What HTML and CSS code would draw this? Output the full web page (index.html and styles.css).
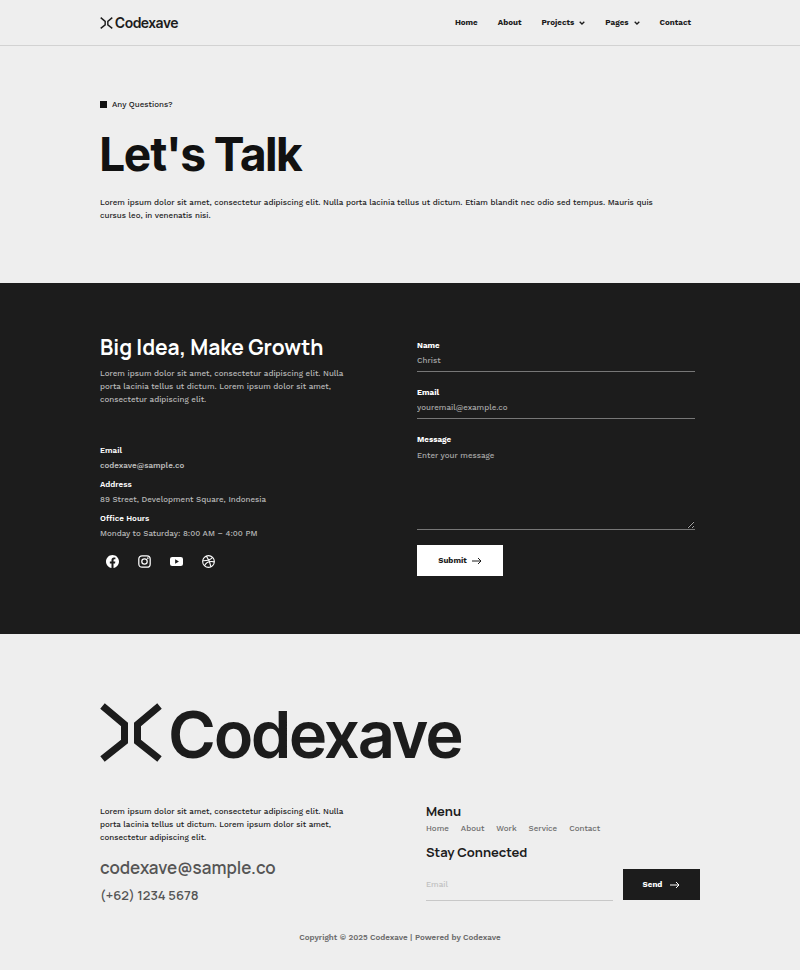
FILE: index.html
```html
<!DOCTYPE html>
<html lang="en">
<head>
<meta charset="utf-8">
<meta name="viewport" content="width=device-width, initial-scale=1">
<title>Codexave – Contact</title>
<link rel="stylesheet" href="styles.css">
</head>
<body>
<svg class="sprite" aria-hidden="true">
  <symbol id="mark" viewBox="0 0 62 59">
    <path d="M2.500 3 24.500 21.500V38.500L2.500 56M59.500 3 37.500 21.500V38.500L59.500 56" fill="none" stroke="currentColor" stroke-width="7"/>
  </symbol>
  <symbol id="arrow" viewBox="0 0 10 8">
    <path d="M0 4H9M6 1 9 4 6 7" fill="none" stroke="currentColor" stroke-width="1"/>
  </symbol>
  <symbol id="chevron" viewBox="0 0 6 4">
    <path d="M.7.700 3 3 5.300.700" fill="none" stroke="currentColor" stroke-width="1.300"/>
  </symbol>
</svg>

<header class="site-header">
  <div class="container header-row">
    <a class="brand" href="#"><svg class="brand-mark"><use href="#mark"/></svg>Codexave</a>
    <nav class="main-nav" aria-label="Main">
      <a href="#">Home</a>
      <a href="#">About</a>
      <a href="#">Projects<svg class="chevron"><use href="#chevron"/></svg></a>
      <a href="#">Pages<svg class="chevron"><use href="#chevron"/></svg></a>
      <a href="#">Contact</a>
    </nav>
  </div>
</header>

<main>
  <section class="hero">
    <div class="container">
      <p class="eyebrow">Any Questions?</p>
      <h1>Let's Talk</h1>
      <p class="lead">Lorem ipsum dolor sit amet, consectetur adipiscing elit. Nulla porta lacinia tellus ut dictum. Etiam blandit nec odio sed tempus. Mauris quis cursus leo, in venenatis nisi.</p>
    </div>
  </section>

  <section class="contact">
    <div class="container contact-grid">
      <div class="details">
        <h2>Big Idea, Make Growth</h2>
        <p class="intro">Lorem ipsum dolor sit amet, consectetur adipiscing elit. Nulla porta lacinia tellus ut dictum. Lorem ipsum dolor sit amet, consectetur adipiscing elit.</p>
        <dl>
          <dt>Email</dt>
          <dd><a class="mail" href="mailto:codexave@sample.co">codexave@sample.co</a></dd>
          <dt>Address</dt>
          <dd>89 Street, Development Square, Indonesia</dd>
          <dt>Office Hours</dt>
          <dd>Monday to Saturday: 8:00 AM – 4:00 PM</dd>
        </dl>
        <div class="social">
          <a href="#" aria-label="Facebook"><svg viewBox="0 0 24 24"><path fill="currentColor" d="M24 12.070C24 5.400 18.630 0 12 0S0 5.400 0 12.070c0 6.030 4.390 11.020 10.130 11.930v-8.440H7.080v-3.490h3.050V9.410c0-3.030 1.790-4.700 4.530-4.700 1.310 0 2.680.24 2.680.24v2.970h-1.510c-1.490 0-1.960.93-1.960 1.890v2.260h3.330l-.53 3.490h-2.800V24C19.610 23.090 24 18.100 24 12.070"/></svg></a>
          <a href="#" aria-label="Instagram"><svg viewBox="0 0 24 24"><g fill="none" stroke="currentColor" stroke-width="2.300"><rect x="1.500" y="1.500" width="21" height="21" rx="6"/><circle cx="12" cy="12" r="5"/></g><circle cx="18.200" cy="5.800" r="1.500" fill="currentColor"/></svg></a>
          <a href="#" aria-label="YouTube"><svg viewBox="0 0 24 24"><path fill="currentColor" fill-rule="evenodd" d="M4 3.500h16a4 4 0 0 1 4 4v9a4 4 0 0 1-4 4H4a4 4 0 0 1-4-4v-9a4 4 0 0 1 4-4zM9.500 8v8l7-4z"/></svg></a>
          <a href="#" aria-label="Dribbble"><svg viewBox="0 0 24 24"><g fill="none" stroke="currentColor" stroke-width="2"><circle cx="12" cy="12" r="10.800"/><path d="M8 2c4 5 7 11 8.500 20M1.300 10.500C9 10.700 15.500 9 19.500 4.300M4.500 19.700c3.500-6.500 10-9 18.200-7"/></g></svg></a>
        </div>
      </div>

      <form class="contact-form">
        <label for="name">Name</label>
        <input id="name" type="text" placeholder="Christ">
        <label for="email">Email</label>
        <input id="email" type="email" placeholder="youremail@example.co">
        <label for="message">Message</label>
        <textarea id="message" placeholder="Enter your message"></textarea>
        <button class="button light" type="button">Submit<svg class="arrow"><use href="#arrow"/></svg></button>
      </form>
    </div>
  </section>
</main>

<footer class="site-footer">
  <div class="container">
    <a class="wordmark" href="#"><svg class="wordmark-mark"><use href="#mark"/></svg>Codexave</a>
    <div class="footer-grid">
      <div>
        <p class="about">Lorem ipsum dolor sit amet, consectetur adipiscing elit. Nulla porta lacinia tellus ut dictum. Lorem ipsum dolor sit amet, consectetur adipiscing elit.</p>
        <a class="footer-mail" href="mailto:codexave@sample.co">codexave@sample.co</a>
        <a class="footer-phone" href="tel:+6212345678">(+62) 1234 5678</a>
      </div>
      <div>
        <h3>Menu</h3>
        <nav class="footer-nav" aria-label="Footer">
          <a href="#">Home</a><a href="#">About</a><a href="#">Work</a><a href="#">Service</a><a href="#">Contact</a>
        </nav>
        <h3>Stay Connected</h3>
        <form class="subscribe">
          <input type="email" placeholder="Email" aria-label="Email">
          <button class="button dark" type="button">Send<svg class="arrow"><use href="#arrow"/></svg></button>
        </form>
      </div>
    </div>
    <p class="copyright">Copyright © 2025 Codexave | Powered by Codexave</p>
  </div>
</footer>
</body>
</html>
```
FILE: styles.css
```css
* { box-sizing: border-box; margin: 0; padding: 0; }

body {
  background: #eeeeee;
  color: #1c1c1c;
  font: 500 8px/13px "Work Sans", Inter, sans-serif;
}

a { color: inherit; text-decoration: none; }
svg { display: block; flex: none; }
.sprite { position: absolute; width: 0; height: 0; }
.container { width: 75%; margin: 0 auto; }

h2, h3, .footer-mail, .footer-phone { font-family: Manrope, Inter, sans-serif; }

.site-header { border-bottom: 1px solid #d2d2d2; }
.header-row { display: flex; align-items: center; justify-content: space-between; height: 45px; }
.brand { display: flex; align-items: center; gap: 2px; font: 600 14px/16px "Inter Tight", Inter, sans-serif; }
.brand-mark { width: 13px; height: 12px; }
.main-nav { display: flex; gap: 20px; padding-right: 9px; font-weight: 700; }
.main-nav a { display: flex; align-items: center; }
.chevron { width: 6px; height: 4px; margin-left: 5px; }

.hero { padding: 52px 0 61px; }
.eyebrow { display: flex; align-items: center; gap: 5px; }
.eyebrow::before { content: ""; width: 7px; height: 7px; background: #111; }
h1 { margin: 14px 0 13px; font: 700 46px/58px "Inter Tight", Inter, sans-serif; color: #111; }
.lead { padding-right: 24px; }

.contact { background: #1c1c1c; color: #fff; padding: 50px 0 58px; }
.contact-grid { display: grid; grid-template-columns: 259px 278px; justify-content: space-between; padding-right: 5px; }
h2 { font-size: 21px; font-weight: 700; line-height: 28px; }
.intro { margin-top: 6px; color: #b8b8b8; }
dl { margin-top: 38px; }
dt { font-weight: 600; line-height: 13px; }
dd { margin-bottom: 4px; line-height: 16px; padding-top: 1px; color: #b8b8b8; }
.mail { font-weight: 600; }
.social { display: flex; gap: 19px; padding: 9px 6px 0; }
.social svg { width: 13px; height: 13px; }

.contact-form { display: flex; flex-direction: column; padding-top: 6px; }
.contact-form label { font-weight: 700; }
input, textarea {
  width: 100%;
  border: 0;
  border-bottom: 1px solid #777;
  border-radius: 0;
  outline: 0;
  background: transparent;
  color: inherit;
  font: inherit;
}
.contact-form input { height: 20px; padding-bottom: 3px; margin-bottom: 14px; }
.contact-form textarea { height: 84px; padding-top: 3px; resize: vertical; }
.contact-form ::placeholder { color: #a8a8a8; opacity: 1; }

.button {
  display: flex;
  align-items: center;
  justify-content: center;
  height: 31px;
  border: 0;
  font: inherit;
  font-weight: 700;
  cursor: pointer;
}
.arrow { width: 10px; height: 8px; }
.light { align-self: flex-start; width: 86px; margin-top: 15px; gap: 5px; background: #fff; color: #1c1c1c; }
.dark { width: 77px; gap: 8px; background: #1c1c1c; color: #fff; }

.site-footer { padding: 61px 0 26px; }
.wordmark { display: flex; align-items: flex-start; gap: 7px; font: 600 65px/80px "Inter Tight", Inter, sans-serif; }
.wordmark-mark { width: 62px; height: 59px; margin-top: 8px; }
.footer-grid { display: grid; grid-template-columns: 259px 274px; justify-content: space-between; margin-top: 28px; }
.about { padding-top: 2px; }
.footer-mail, .footer-phone { display: block; color: #555; font-weight: 600; }
.footer-mail { margin-top: 12px; font-size: 17px; line-height: 24px; }
.footer-phone { margin-top: 5px; font-size: 13px; line-height: 20px; }
h3 { font-size: 13px; font-weight: 700; line-height: 17px; }
.footer-nav { display: flex; gap: 12px; margin: 2px 0 9px; color: #6b6b6b; }
.subscribe { display: flex; gap: 10px; margin-top: 8px; }
.subscribe input { flex: 1; min-width: 0; height: 32px; border-color: #c8c8c8; }
.subscribe ::placeholder { color: #c0c0c0; opacity: 1; }
.copyright { margin-top: 26px; text-align: center; font-weight: 600; color: #6b6b6b; }
```
